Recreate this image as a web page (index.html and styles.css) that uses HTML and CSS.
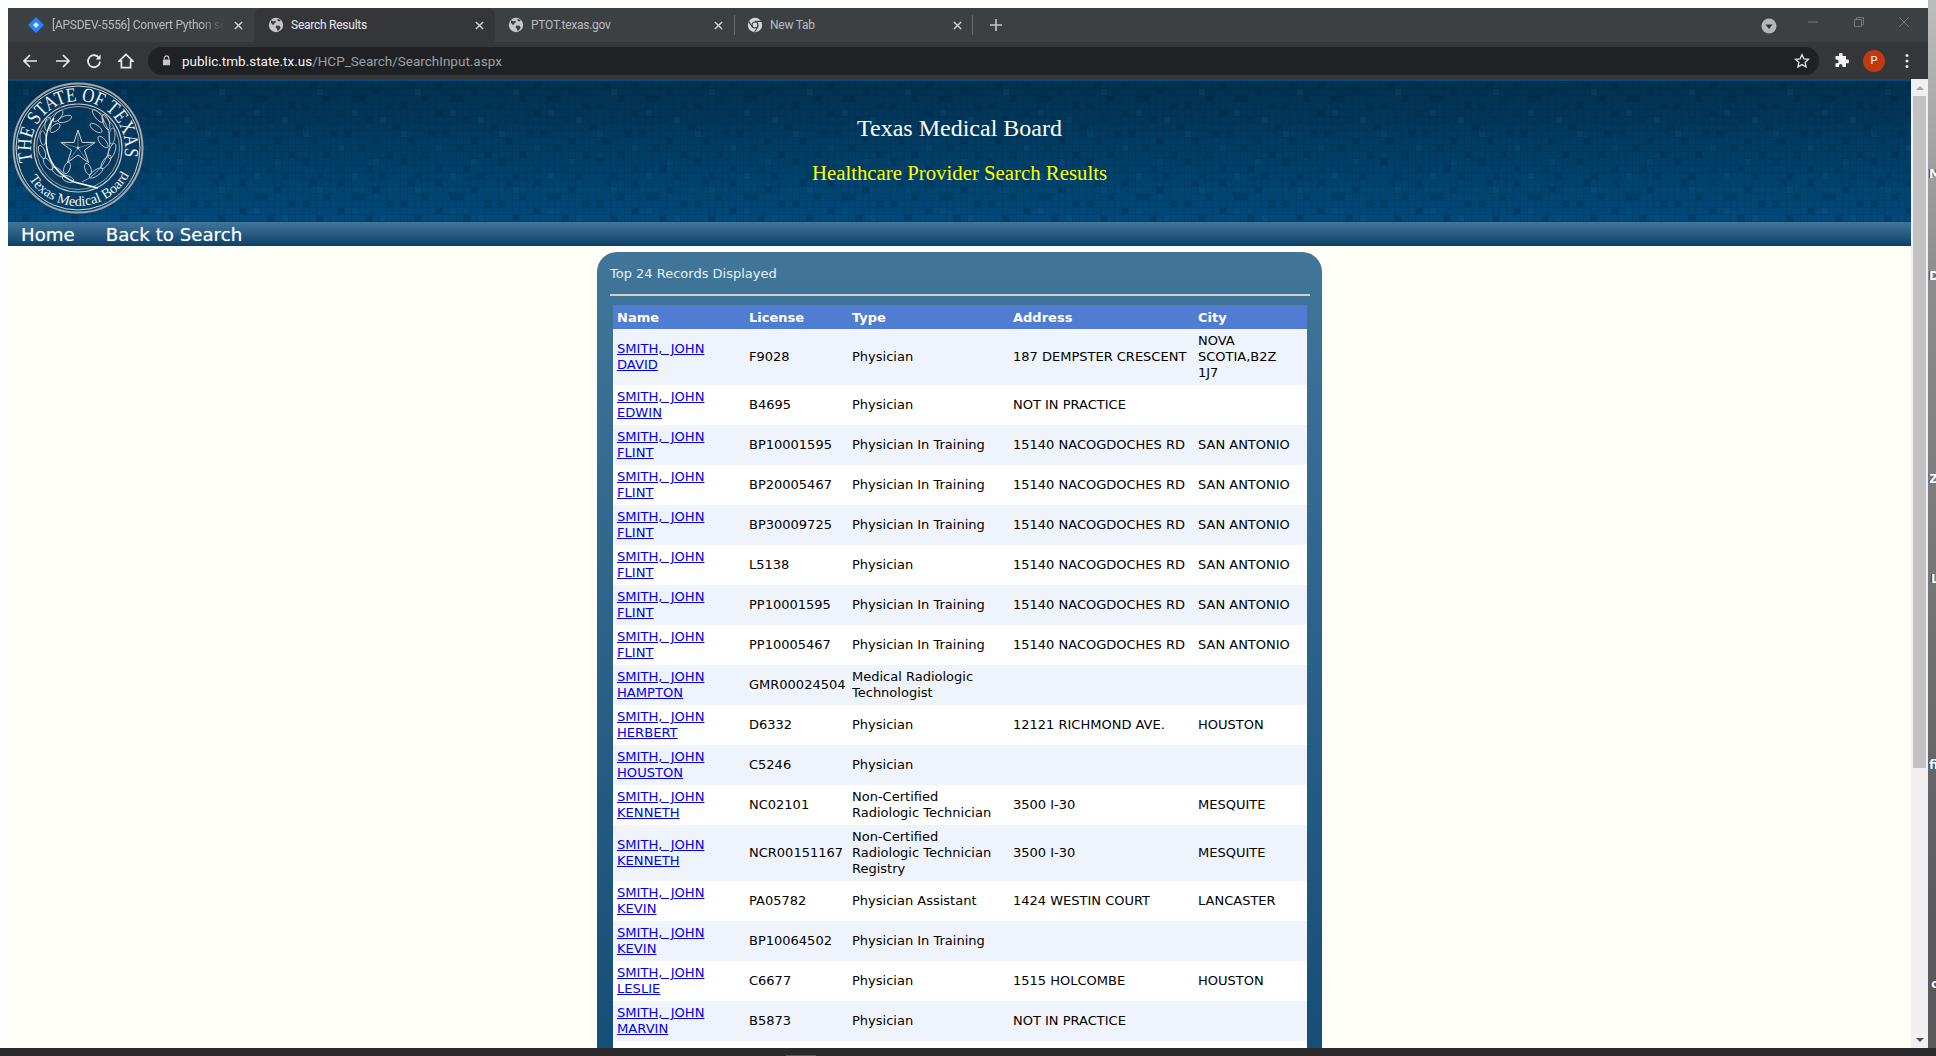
FILE: index.html
```html
<!DOCTYPE html>
<html lang="en">
<head>
  <meta charset="UTF-8">
  <title>Search Results</title>
  <link rel="stylesheet" href="styles.css">
</head>
<body>
  <svg class="defs" width="0" height="0">
    <defs>
      <symbol id="globe" viewBox="0 0 16 16">
        <circle cx="8" cy="8" r="7.2" fill="#c4c7c9"/>
        <path d="M3 3.2l2.4 1.2 2-1 .6 1.6-1.6 1.2-.4 1.6-1.6-.4-1.4-1.6zM8.6 8.4l3 .4 1 1.4-1.4 2.8-1.6 1-.8-2.6-1.4-1.4zM10 1.8l2.6 1.4-1.4 1.2-1.8-.8z" fill="#3a3c3f"/>
      </symbol>
      <symbol id="tab-x" viewBox="0 0 10 10">
        <path d="M1 1l8 8M9 1l-8 8" stroke="currentColor" stroke-width="1.5" fill="none"/>
      </symbol>
      <pattern id="tiles" width="98" height="98" patternUnits="userSpaceOnUse">
        <path d="M0 .5H98M0 7.5H98M0 14.5H98M0 21.5H98M0 28.5H98M0 35.5H98M0 42.5H98M0 49.5H98M0 56.5H98M0 63.5H98M0 70.5H98M0 77.5H98M0 84.5H98M0 91.5H98M.5 0V98M7.5 0V98M14.5 0V98M21.5 0V98M28.5 0V98M35.5 0V98M42.5 0V98M49.5 0V98M56.5 0V98M63.5 0V98M70.5 0V98M77.5 0V98M84.5 0V98M91.5 0V98" stroke="#001f3c" stroke-opacity=".16"/>
        <g fill="#00203f" fill-opacity=".28">
          <rect x="8" y="1" width="6" height="6"/><rect x="36" y="1" width="6" height="6"/><rect x="71" y="8" width="6" height="6"/>
          <rect x="22" y="15" width="6" height="6"/><rect x="50" y="15" width="6" height="6"/><rect x="57" y="15" width="6" height="6"/>
          <rect x="1" y="22" width="6" height="6"/><rect x="85" y="22" width="6" height="6"/><rect x="36" y="29" width="6" height="6"/>
          <rect x="64" y="36" width="6" height="6"/><rect x="15" y="36" width="6" height="6"/><rect x="92" y="43" width="6" height="6"/>
          <rect x="29" y="50" width="6" height="6"/><rect x="43" y="50" width="6" height="6"/><rect x="8" y="57" width="6" height="6"/>
          <rect x="71" y="57" width="6" height="6"/><rect x="57" y="64" width="6" height="6"/><rect x="22" y="71" width="6" height="6"/>
          <rect x="85" y="71" width="6" height="6"/><rect x="1" y="78" width="6" height="6"/><rect x="36" y="85" width="6" height="6"/>
          <rect x="64" y="85" width="6" height="6"/><rect x="15" y="92" width="6" height="6"/><rect x="78" y="92" width="6" height="6"/>
        </g>
        <g fill="#2a6a96" fill-opacity=".12">
          <rect x="15" y="8" width="6" height="6"/><rect x="50" y="29" width="6" height="6"/><rect x="78" y="36" width="6" height="6"/>
          <rect x="1" y="50" width="6" height="6"/><rect x="36" y="64" width="6" height="6"/><rect x="71" y="78" width="6" height="6"/>
          <rect x="50" y="92" width="6" height="6"/>
        </g>
      </pattern>
    </defs>
  </svg>

  <div class="desktop">
    <div class="window">
      <div class="tabstrip">
        <div class="tab">
          <svg class="favicon" viewBox="0 0 16 16"><path d="M8 0l8 8-8 8-8-8z" fill="#2684ff"/><path d="M8 5l3 3-3 3-3-3z" fill="#dbe9fb"/></svg>
          <span class="tab-title fade">[APSDEV-5556] Convert Python script</span>
          <svg class="tab-close"><use href="#tab-x"/></svg>
        </div>
        <div class="tab active">
          <svg class="favicon"><use href="#globe"/></svg>
          <span class="tab-title">Search Results</span>
          <svg class="tab-close"><use href="#tab-x"/></svg>
        </div>
        <div class="tab">
          <svg class="favicon"><use href="#globe"/></svg>
          <span class="tab-title">PTOT.texas.gov</span>
          <svg class="tab-close"><use href="#tab-x"/></svg>
        </div>
        <div class="tab divided">
          <svg class="favicon" viewBox="0 0 16 16"><circle cx="8" cy="8" r="7.2" fill="#d5d7d9"/><circle cx="8" cy="8" r="3.6" fill="#3c3f41"/><circle cx="8" cy="8" r="2.4" fill="#d5d7d9"/><path d="M8 4.4h6.4M5 9.8L1.8 4.4M11 9.8L7.6 15" stroke="#3c3f41" stroke-width="1.1"/></svg>
          <span class="tab-title">New Tab</span>
          <svg class="tab-close"><use href="#tab-x"/></svg>
        </div>
        <svg class="new-tab" viewBox="0 0 12 12"><path d="M6 0v12M0 6h12" stroke="#c4c7c9" stroke-width="1.6"/></svg>
        <div class="window-controls">
          <svg class="profile-menu" viewBox="0 0 16 16"><circle cx="8" cy="8" r="7.5" fill="#b4b7ba"/><path d="M4.5 6.5h7L8 11z" fill="#2e3033"/></svg>
          <svg class="win-min" viewBox="0 0 10 10"><path d="M0 5h10" stroke="#75787b"/></svg>
          <svg class="win-restore" viewBox="0 0 10 10"><path d="M.5 2.5h7v7h-7zM2.5 2.5v-2h7v7h-2" fill="none" stroke="#75787b"/></svg>
          <svg class="win-close" viewBox="0 0 10 10"><path d="M0 0l10 10M10 0L0 10" stroke="#75787b"/></svg>
        </div>
      </div>

      <div class="toolbar">
        <svg class="tool back" viewBox="0 0 16 16"><path d="M15 8H2M8 2L2 8l6 6" fill="none" stroke="#e8eaed" stroke-width="1.7"/></svg>
        <svg class="tool forward" viewBox="0 0 16 16"><path d="M1 8h13M8 2l6 6-6 6" fill="none" stroke="#e8eaed" stroke-width="1.7"/></svg>
        <svg class="tool reload" viewBox="0 0 16 16"><path d="M13.2 5.2A6 6 0 1 0 14 8.6" fill="none" stroke="#e8eaed" stroke-width="1.8"/><path d="M14.6 1.4v5h-5z" fill="#e8eaed"/></svg>
        <svg class="tool home" viewBox="0 0 16 16"><path d="M8 1.4L1 8.2h2.4v6.4h9.2V8.2H15z" fill="none" stroke="#e8eaed" stroke-width="1.7"/></svg>
        <div class="omnibox">
          <svg class="lock" viewBox="0 0 10 12"><path d="M2.5 5V3.4a2.5 2.5 0 0 1 5 0V5" fill="none" stroke="#c4c7c9" stroke-width="1.2"/><rect x="1" y="5" width="8" height="6.4" rx="1" fill="#c4c7c9"/></svg>
          <span class="url"><b>public.tmb.state.tx.us</b>/HCP_Search/SearchInput.aspx</span>
          <svg class="star" viewBox="0 0 16 16"><path d="M8 1.6l1.9 4.2 4.6.5-3.4 3.1 1 4.5L8 11.6l-4.1 2.3 1-4.5L1.500 6.300l4.6-.5z" fill="none" stroke="#dfe1e4" stroke-width="1.3"/></svg>
        </div>
        <svg class="puzzle" viewBox="0 0 16 16"><path d="M6 1.500a1.800 1.800 0 0 1 3.600 0V3H13v3.500h1.300a1.900 1.900 0 0 1 0 3.800H13V14H9.400v-1.300a1.700 1.700 0 0 0-3.400 0V14H2.500v-3.700h1.200a1.900 1.900 0 0 0 0-3.800H2.500V3H6z" fill="#f1f3f4"/></svg>
        <span class="avatar">P</span>
        <svg class="kebab" viewBox="0 0 4 16"><circle cx="2" cy="2.500" r="1.500" fill="#e8eaed"/><circle cx="2" cy="8" r="1.500" fill="#e8eaed"/><circle cx="2" cy="13.500" r="1.500" fill="#e8eaed"/></svg>
      </div>

      <div class="viewport">
        <div class="page">
          <header class="banner">
            <svg class="banner-tiles" width="100%" height="100%"><rect width="100%" height="100%" fill="url(#tiles)"/></svg>
            <svg class="seal" viewBox="0 0 132 132">
              <circle cx="66" cy="66" r="64.500" fill="#0a3a5c" fill-opacity=".5" stroke="#a6a6a6" stroke-width="2"/>
              <circle cx="66" cy="66" r="62" fill="none" stroke="#d8d8d8" stroke-width="1"/>
              <circle cx="66" cy="66" r="44" fill="none" stroke="#c8c8c8" stroke-width="1.200"/>
              <circle cx="66" cy="66" r="41.500" fill="none" stroke="#9a9a9a" stroke-width="1"/>
              <defs>
                <path id="seal-top" d="M20.800 79A47 47 0 1 1 111.200 79"/>
                <path id="seal-bottom" d="M16.800 96.700A58 58 0 0 0 117.200 93.200"/>
              </defs>
              <text class="seal-top"><textPath href="#seal-top" textLength="169" lengthAdjust="spacingAndGlyphs">THE STATE OF TEXAS</textPath></text>
              <text class="seal-bottom"><textPath href="#seal-bottom" textLength="121" lengthAdjust="spacingAndGlyphs">Texas Medical Board</textPath></text>
              <g class="wreath-stem">
                <path d="M90 36C104 54 100 86 70 100"/>
              </g>
              <g class="wreath-left">
                <ellipse cx="46" cy="34" rx="3" ry="7" transform="rotate(40 46 34)"/>
                <ellipse cx="53" cy="37" rx="3" ry="7" transform="rotate(70 53 37)"/>
                <ellipse cx="36" cy="42" rx="3" ry="7" transform="rotate(10 36 42)"/>
                <ellipse cx="43" cy="46" rx="3" ry="6" transform="rotate(50 43 46)"/>
                <ellipse cx="31" cy="56" rx="3" ry="7" transform="rotate(-5 31 56)"/>
                <ellipse cx="30" cy="70" rx="3" ry="7" transform="rotate(-20 30 70)"/>
                <ellipse cx="36" cy="82" rx="3" ry="7" transform="rotate(-35 36 82)"/>
                <ellipse cx="46" cy="90" rx="3" ry="7" transform="rotate(-55 46 90)"/>
                <ellipse cx="55" cy="86" rx="3" ry="6" transform="rotate(20 55 86)"/>
                <ellipse cx="56" cy="97" rx="3" ry="6" transform="rotate(-70 56 97)"/>
              </g>
              <g class="wreath-right">
                <ellipse cx="86" cy="34" rx="3" ry="8" transform="rotate(-40 86 34)"/>
                <ellipse cx="94" cy="40" rx="3" ry="8" transform="rotate(-20 94 40)"/>
                <ellipse cx="84" cy="46" rx="3" ry="7" transform="rotate(-55 84 46)"/>
                <ellipse cx="100" cy="54" rx="3" ry="8" transform="rotate(5 100 54)"/>
                <ellipse cx="91" cy="60" rx="3" ry="7" transform="rotate(-40 91 60)"/>
                <ellipse cx="100" cy="69" rx="3" ry="8" transform="rotate(20 100 69)"/>
                <ellipse cx="94" cy="80" rx="3" ry="8" transform="rotate(35 94 80)"/>
                <ellipse cx="84" cy="91" rx="3" ry="8" transform="rotate(55 84 91)"/>
                <ellipse cx="76" cy="87" rx="3" ry="6" transform="rotate(-20 76 87)"/>
              </g>
              <path d="M42 36C28 54 32 86 62 100l24 6" fill="none" stroke="#fff" stroke-width="1.400"/>
              <path class="star-outline" d="M66 48L70.060 60.400 83.100 60.400 72.560 68.130 76.600 80.600 66 72.900 55.400 80.600 59.440 68.130 48.900 60.400 61.940 60.400z"/>
              <path class="star-facets" d="M66 48v18M83.100 60.400L66 66M76.600 80.600L66 66M55.400 80.600L66 66M48.900 60.400L66 66"/>
              <circle cx="66" cy="66" r="1.400" fill="#d0d0d0"/>
            </svg>
            <div class="banner-titles">
              <h1>Texas Medical Board</h1>
              <h2>Healthcare Provider Search Results</h2>
            </div>
          </header>
          <nav class="main-nav">
            <a href="#">Home</a>
            <a href="#">Back to Search</a>
          </nav>

          <div class="results-panel">
            <div class="results-title">Top 24 Records Displayed</div>
            <hr class="results-rule">
            <table class="results">
              <colgroup>
                <col class="col-name"><col class="col-license"><col class="col-type"><col class="col-address"><col class="col-city">
              </colgroup>
              <thead>
                <tr><th>Name</th><th>License</th><th>Type</th><th>Address</th><th>City</th></tr>
              </thead>
              <tbody>
                <tr><td><a href="#">SMITH, JOHN DAVID</a></td><td>F9028</td><td>Physician</td><td>187 DEMPSTER CRESCENT</td><td>NOVA SCOTIA,B2Z 1J7</td></tr>
                <tr><td><a href="#">SMITH, JOHN EDWIN</a></td><td>B4695</td><td>Physician</td><td>NOT IN PRACTICE</td><td></td></tr>
                <tr><td><a href="#">SMITH, JOHN FLINT</a></td><td>BP10001595</td><td>Physician In Training</td><td>15140 NACOGDOCHES RD</td><td>SAN ANTONIO</td></tr>
                <tr><td><a href="#">SMITH, JOHN FLINT</a></td><td>BP20005467</td><td>Physician In Training</td><td>15140 NACOGDOCHES RD</td><td>SAN ANTONIO</td></tr>
                <tr><td><a href="#">SMITH, JOHN FLINT</a></td><td>BP30009725</td><td>Physician In Training</td><td>15140 NACOGDOCHES RD</td><td>SAN ANTONIO</td></tr>
                <tr><td><a href="#">SMITH, JOHN FLINT</a></td><td>L5138</td><td>Physician</td><td>15140 NACOGDOCHES RD</td><td>SAN ANTONIO</td></tr>
                <tr><td><a href="#">SMITH, JOHN FLINT</a></td><td>PP10001595</td><td>Physician In Training</td><td>15140 NACOGDOCHES RD</td><td>SAN ANTONIO</td></tr>
                <tr><td><a href="#">SMITH, JOHN FLINT</a></td><td>PP10005467</td><td>Physician In Training</td><td>15140 NACOGDOCHES RD</td><td>SAN ANTONIO</td></tr>
                <tr><td><a href="#">SMITH, JOHN HAMPTON</a></td><td>GMR00024504</td><td>Medical Radiologic Technologist</td><td></td><td></td></tr>
                <tr><td><a href="#">SMITH, JOHN HERBERT</a></td><td>D6332</td><td>Physician</td><td>12121 RICHMOND AVE.</td><td>HOUSTON</td></tr>
                <tr><td><a href="#">SMITH, JOHN HOUSTON</a></td><td>C5246</td><td>Physician</td><td></td><td></td></tr>
                <tr><td><a href="#">SMITH, JOHN KENNETH</a></td><td>NC02101</td><td>Non-Certified Radiologic Technician</td><td>3500 I-30</td><td>MESQUITE</td></tr>
                <tr><td><a href="#">SMITH, JOHN KENNETH</a></td><td>NCR00151167</td><td>Non-Certified Radiologic Technician Registry</td><td>3500 I-30</td><td>MESQUITE</td></tr>
                <tr><td><a href="#">SMITH, JOHN KEVIN</a></td><td>PA05782</td><td>Physician Assistant</td><td>1424 WESTIN COURT</td><td>LANCASTER</td></tr>
                <tr><td><a href="#">SMITH, JOHN KEVIN</a></td><td>BP10064502</td><td>Physician In Training</td><td></td><td></td></tr>
                <tr><td><a href="#">SMITH, JOHN LESLIE</a></td><td>C6677</td><td>Physician</td><td>1515 HOLCOMBE</td><td>HOUSTON</td></tr>
                <tr><td><a href="#">SMITH, JOHN MARVIN</a></td><td>B5873</td><td>Physician</td><td>NOT IN PRACTICE</td><td></td></tr>
                <tr class="empty-row"><td></td><td></td><td></td><td></td><td></td></tr>
              </tbody>
            </table>
          </div>
        </div>

        <div class="scrollbar">
          <div class="scroll-btn"><span class="arrow-up"></span></div>
          <div class="scroll-track"><div class="scroll-thumb"></div></div>
          <div class="scroll-btn"><span class="arrow-down"></span></div>
        </div>
      </div>
    </div>

    <div class="behind">
      <span class="peek peek-1">M</span>
      <span class="peek peek-2">D</span>
      <span class="peek peek-3">Z</span>
      <span class="peek peek-4">L</span>
      <span class="peek peek-5">fi</span>
      <span class="peek peek-6">c</span>
    </div>
  </div>

  <div class="taskbar">
    <span class="taskbar-item"></span>
    <span class="clock">12:14 PM</span>
  </div>
</body>
</html>
```

FILE: styles.css
```css
/* Reset */
* {
  margin: 0;
  padding: 0;
  box-sizing: border-box;
}

html, body {
  height: 1056px;
  overflow: hidden;
}

body {
  background: #fff;
  font-family: "DejaVu Sans", Verdana, sans-serif;
}

.defs {
  position: absolute;
}

/* Desktop around the browser window */
.desktop {
  display: flex;
  height: 1048px;
}

.window {
  flex: 1;
  margin: 8px 0 0 8px;
  display: flex;
  flex-direction: column;
  min-width: 0;
}

.behind {
  width: 8px;
  position: relative;
  overflow: hidden;
  background: linear-gradient(to bottom, #bdbdbd, #8f8f8f 25%, #5a5a5a 88%);
}

.peek {
  position: absolute;
  left: 1px;
  font-size: 12px;
  line-height: 12px;
  font-weight: bold;
  color: #fff;
  text-shadow: -1px 0 0 #1c2f80;
}

.peek-1 { top: 168px; }
.peek-2 { top: 270px; }
.peek-3 { top: 473px; }
.peek-4 { top: 573px; left: 3px; }
.peek-5 { top: 759px; }
.peek-6 { top: 978px; left: 3px; }

.taskbar {
  height: 8px;
  background: #2b2b2b;
  overflow: hidden;
  position: relative;
  text-align: right;
  padding-right: 14px;
}

.taskbar-item {
  position: absolute;
  left: 786px;
  top: 7px;
  width: 30px;
  height: 1px;
  background: #555;
}

.clock {
  display: block;
  font-family: "Open Sans", sans-serif;
  font-size: 11px;
  line-height: 14px;
  padding-top: 5px;
  color: #fff;
}

/* Browser tab strip */
.tabstrip {
  height: 34px;
  background: #3d4043;
  display: flex;
  align-items: stretch;
  padding-left: 7px;
  font-family: Roboto, sans-serif;
  font-size: 12px;
  letter-spacing: -0.25px;
}

.tab {
  width: 239px;
  display: flex;
  align-items: center;
  padding: 0 11px 0 13px;
  color: #b9bcbf;
  position: relative;
}

.tab.active {
  background: #35363a;
  border-radius: 8px 8px 0 0;
  color: #e8eaed;
  width: 241px;
  padding: 0 11px 0 14px;
}

.tab.divided::before,
.tab.divided::after {
  content: "";
  position: absolute;
  top: 7px;
  bottom: 7px;
  width: 1px;
  background: #6a6d70;
}

.tab.divided::before { left: 0; }
.tab.divided::after { right: 0; }

.favicon {
  width: 16px;
  height: 16px;
  flex: none;
}

.tab-title {
  flex: 1;
  margin-left: 7px;
  white-space: nowrap;
  overflow: hidden;
}

.tab-title.fade {
  margin-left: 8px;
  margin-right: 10px;
  -webkit-mask-image: linear-gradient(to right, #000 86%, transparent);
  mask-image: linear-gradient(to right, #000 86%, transparent);
}

.tab-close {
  width: 9px;
  height: 9px;
  flex: none;
  color: #d5d7d9;
}

.new-tab {
  width: 12px;
  height: 12px;
  align-self: center;
  margin-left: 17px;
}

.window-controls {
  margin-left: auto;
  display: flex;
  align-items: center;
  padding-right: 19px;
}

.profile-menu {
  width: 16px;
  height: 16px;
  margin-top: 1px;
}

.win-min,
.win-restore,
.win-close {
  width: 10px;
  height: 10px;
  margin-top: -6px;
}

.win-min { margin-left: 31px; }
.win-restore { margin-left: 36px; }
.win-close { margin-left: 35px; }

/* Browser toolbar */
.toolbar {
  height: 37px;
  background: #35363a;
  display: flex;
  align-items: center;
  padding-left: 14px;
}

.tool {
  width: 16px;
  height: 16px;
  flex: none;
}

.forward { margin-left: 17px; }
.reload { margin-left: 15px; }
.home { margin-left: 16px; }

.omnibox {
  width: 1671px;
  height: 28px;
  margin-left: 14px;
  border-radius: 14px;
  background: #202124;
  display: flex;
  align-items: center;
  padding: 0 9px 0 14px;
  font-family: Roboto, sans-serif;
  font-size: 13.500px;
  color: #9aa0a6;
}

.lock {
  width: 9px;
  height: 11px;
  flex: none;
}

.url {
  margin-left: 11px;
}

.url b {
  font-weight: 400;
  color: #f1f3f4;
}

.star {
  width: 16px;
  height: 16px;
  margin-left: auto;
}

.puzzle {
  width: 16px;
  height: 16px;
  margin-left: 14px;
}

.avatar {
  width: 22px;
  height: 22px;
  margin-left: 14px;
  border-radius: 50%;
  background: #c0390f;
  color: #fff;
  font-family: Roboto, sans-serif;
  font-size: 11px;
  line-height: 22px;
  text-align: center;
}

.kebab {
  width: 4px;
  height: 16px;
  margin-left: 20px;
}

/* Viewport */
.viewport {
  flex: 1;
  display: flex;
  min-height: 0;
  overflow: hidden;
}

.page {
  flex: 1;
  min-width: 0;
  background: #fffff8;
}

.scrollbar {
  width: 17px;
  display: flex;
  flex-direction: column;
  background: #f0f0f3;
}

.scroll-btn {
  height: 17px;
  display: flex;
  align-items: center;
  justify-content: center;
}

.arrow-up {
  border: 4px solid transparent;
  border-top: 0;
  border-bottom: 4px solid #a3a3a3;
}

.arrow-down {
  border: 4px solid transparent;
  border-bottom: 0;
  border-top: 4px solid #505050;
}

.scroll-track {
  flex: 1;
  padding: 0 2px;
}

.scroll-thumb {
  height: 672px;
  background: #c1c1c1;
}

/* Page header */
.banner {
  height: 143px;
  position: relative;
  overflow: hidden;
  border-top: 2px solid #004f80;
  background: linear-gradient(to bottom, #02304f, #004a7a);
  display: flex;
  justify-content: center;
  color: #fff;
  font-family: "Liberation Serif", "Times New Roman", serif;
}

.banner-tiles {
  position: absolute;
  inset: 0;
}

.seal {
  position: absolute;
  left: 4px;
  top: 1px;
  width: 132px;
  height: 132px;
}

.seal-top {
  font-family: "Liberation Serif", serif;
  font-size: 20px;
  fill: #f4f4f4;
}

.seal-bottom {
  font-family: "Liberation Serif", serif;
  font-size: 14px;
  fill: #f4f4f4;
}

.wreath-stem path {
  fill: none;
  stroke: #cfcfcf;
  stroke-width: 0.800;
}

.wreath-left ellipse,
.wreath-right ellipse {
  fill: none;
  stroke: #d6d6d6;
  stroke-width: 0.800;
}

.star-outline {
  fill: none;
  stroke: #d8d8d8;
  stroke-width: 1;
}

.star-facets {
  fill: none;
  stroke: #bdbdbd;
  stroke-width: 0.500;
}

.banner-titles {
  position: relative;
  text-align: center;
  padding-top: 34px;
}

.banner-titles h1 {
  font-size: 24px;
  line-height: 27px;
  font-weight: 400;
}

.banner-titles h2 {
  margin-top: 17px;
  font-size: 20.800px;
  line-height: 27px;
  font-weight: 400;
  color: #ffff00;
}

/* Page nav */
.main-nav {
  height: 24px;
  background: linear-gradient(to bottom, #41769a, #0d4068);
  display: flex;
  gap: 31px;
  padding-left: 13px;
}

.main-nav a {
  color: #fff;
  text-decoration: none;
  font-size: 18.200px;
  line-height: 25px;
  text-shadow: 0 0 1px rgba(255, 255, 255, 0.5);
}

/* Results panel */
.results-panel {
  width: 725px;
  margin: 6px auto 0;
  padding: 14px 12px 20px 13px;
  border-radius: 20px 20px 0 0;
  background: linear-gradient(to bottom, #41769a, #124b74);
}

.results-title {
  font-size: 13px;
  line-height: 16px;
  color: #e6f2f6;
}

.results-rule {
  height: 2px;
  margin: 12px 0 9px;
  border: 0;
  background: #cfcfcf;
}

.results {
  width: 694px;
  margin-left: 3px;
  table-layout: fixed;
  border-collapse: collapse;
  font-size: 13px;
  line-height: 16px;
  background: #fff;
  color: #000;
}

.col-name { width: 132px; }
.col-license { width: 103px; }
.col-type { width: 161px; }
.col-address { width: 185px; }
.col-city { width: 113px; }

.results th {
  height: 24px;
  padding: 5px 4px 3px;
  background: #507cd1;
  color: #fff;
  text-align: left;
}

.results td {
  padding: 4px;
}

.results td:first-child {
  padding-right: 16px;
  font-size: 13.100px;
  word-spacing: 4px;
}

.results td:last-child {
  padding-right: 14px;
}

.results tbody tr:nth-child(odd) {
  background: #eff3fb;
}

.results tbody tr.empty-row {
  height: 40px;
  background: #fff;
}

.results a {
  color: #0000ee;
}
```
